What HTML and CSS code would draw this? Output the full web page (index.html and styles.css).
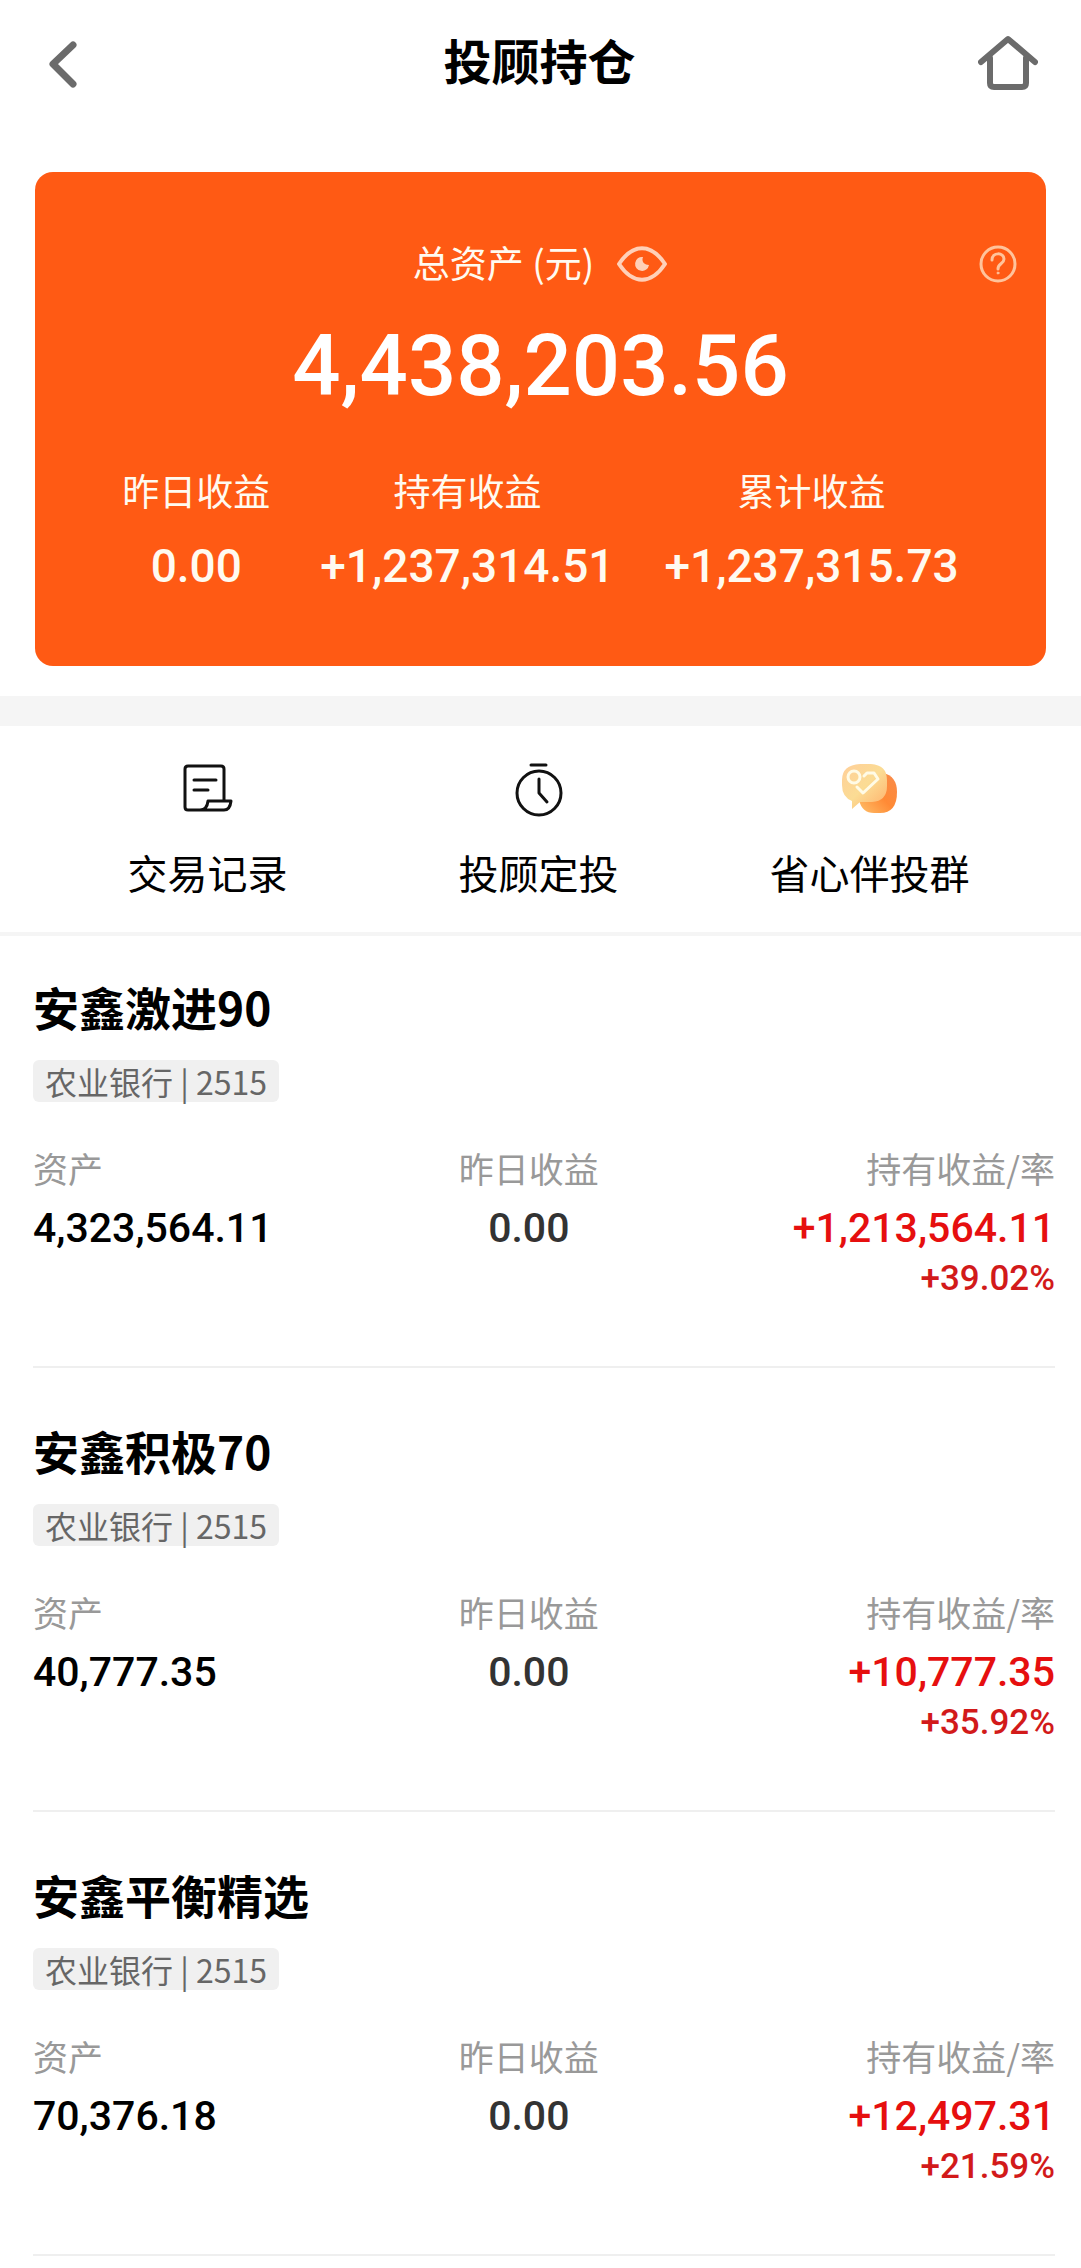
FILE: index.html
```html
<!DOCTYPE html>
<html lang="zh-CN">
<head>
  <meta charset="UTF-8" />
  <meta name="viewport" content="width=device-width, initial-scale=1.0"/>
  <title>投顾持仓</title>
  <link rel="stylesheet" href="styles.css">
</head>
<body>
  <header class="topbar">
    <button class="icon-btn" type="button" aria-label="返回">
      <svg width="60" height="60" viewBox="0 0 60 60" fill="none" stroke="#6b6b6b" stroke-width="7" stroke-linecap="round" stroke-linejoin="round">
        <path d="M32 13 L12 32 L32 52"/>
      </svg>
    </button>
    <h1>投顾持仓</h1>
    <a class="icon-btn" href="#" aria-label="首页">
      <svg width="60" height="60" viewBox="0 0 60 60" fill="none" stroke="#6b6b6b" stroke-width="6" stroke-linecap="round" stroke-linejoin="round">
        <path d="M3 30 L30 7 L57 30"/>
        <path d="M12 26 V51 Q12 55 16 55 H44 Q48 55 48 51 V26"/>
      </svg>
    </a>
  </header>

  <!-- Total assets card -->
  <section class="card">
    <div class="card-head">
      <span class="card-label">总资产 (元)</span>
      <button class="icon-btn" type="button" aria-label="隐藏金额">
        <svg width="52" height="36" viewBox="0 0 52 36">
          <path d="M3 18 C17 -3 35 -3 49 18 C35 39 17 39 3 18 Z" fill="none" stroke="#ffd0b8" stroke-width="4" stroke-linejoin="round"/>
          <path d="M27 11 A7 7 0 1 0 33 19 C29 19 25 16 27 11 Z" fill="#ffd0b8"/>
        </svg>
      </button>
      <button class="icon-btn help" type="button" aria-label="说明">
        <svg width="40" height="40" viewBox="0 0 40 40" fill="none" stroke="#ffc39b" stroke-width="3" stroke-linecap="round">
          <circle cx="20" cy="20" r="17"/>
          <path d="M14 16 C14 8 26 8 26 15 C26 20 20 19 20 25"/>
          <circle cx="20" cy="29" r="1" fill="#ffc39b" stroke-width="1"/>
        </svg>
      </button>
    </div>
    <p class="total">4,438,203.56</p>
    <dl class="summary">
      <div>
        <dt>昨日收益</dt>
        <dd>0.00</dd>
      </div>
      <div>
        <dt>持有收益</dt>
        <dd>+1,237,314.51</dd>
      </div>
      <div>
        <dt>累计收益</dt>
        <dd>+1,237,315.73</dd>
      </div>
    </dl>
  </section>

  <!-- Shortcuts -->
  <nav class="actions">
    <a href="#">
      <svg width="60" height="60" viewBox="0 0 60 60" fill="none" stroke="#111" stroke-width="3" stroke-linecap="round" stroke-linejoin="round">
        <path d="M46 40 V9 Q46 6 43 6 H10 Q7 6 7 9 V47 Q7 50 10 50 H46 Q52 50 53 41 H30 Q29 50 22 50"/>
        <path d="M16 20 H38 M16 30 H30"/>
      </svg>
      <span>交易记录</span>
    </a>
    <a href="#">
      <svg width="60" height="60" viewBox="0 0 60 60" fill="none" stroke="#111" stroke-width="3" stroke-linecap="round" stroke-linejoin="round">
        <path d="M22 5 H37"/>
        <circle cx="30" cy="33" r="22"/>
        <path d="M30 19 V33 L38 42"/>
      </svg>
      <span>投顾定投</span>
    </a>
    <a href="#">
      <svg width="60" height="60" viewBox="0 0 60 60" fill="none">
        <defs>
          <linearGradient id="bubbleBack" x1="0" y1="1" x2="1" y2="0">
            <stop offset="0" stop-color="#ffc069"/>
            <stop offset="0.5" stop-color="#ff8a35"/>
            <stop offset="1" stop-color="#f98b4c"/>
          </linearGradient>
          <linearGradient id="bubbleFront" x1="0" y1="0" x2="1" y2="1">
            <stop offset="0" stop-color="#ffcf9a"/>
            <stop offset="0.5" stop-color="#fbdc94"/>
            <stop offset="1" stop-color="#ffb06a"/>
          </linearGradient>
        </defs>
        <path d="M36 13 H43 Q57 16 57 32 Q57 53 40 53 H34 Q22 53 19 40 Z" fill="url(#bubbleBack)"/>
        <path d="M20 4 H31 Q47 5 47 20 V26 Q47 41 32 42 H20 L12 49 V41 Q2 37 2 25 V20 Q2 5 20 4 Z" fill="url(#bubbleFront)"/>
        <circle cx="14" cy="17" r="6" stroke="#fffbe6" stroke-width="3"/>
        <path d="M24 16 L27 13 H34 L38 19 L23 33 L17 27" stroke="#fffbe6" stroke-width="3" stroke-linecap="round" stroke-linejoin="round"/>
      </svg>
      <span>省心伴投群</span>
    </a>
  </nav>

  <!-- Holdings -->
  <main class="funds">
    <article class="fund">
      <h2>安鑫激进90</h2>
      <p class="bank">农业银行 | 2515</p>
      <dl class="figures">
        <div>
          <dt>资产</dt>
          <dd>4,323,564.11</dd>
        </div>
        <div>
          <dt>昨日收益</dt>
          <dd class="flat">0.00</dd>
        </div>
        <div>
          <dt>持有收益/率</dt>
          <dd class="gain">+1,213,564.11</dd>
          <dd class="rate">+39.02%</dd>
        </div>
      </dl>
    </article>

    <article class="fund">
      <h2>安鑫积极70</h2>
      <p class="bank">农业银行 | 2515</p>
      <dl class="figures">
        <div>
          <dt>资产</dt>
          <dd>40,777.35</dd>
        </div>
        <div>
          <dt>昨日收益</dt>
          <dd class="flat">0.00</dd>
        </div>
        <div>
          <dt>持有收益/率</dt>
          <dd class="gain">+10,777.35</dd>
          <dd class="rate">+35.92%</dd>
        </div>
      </dl>
    </article>

    <article class="fund">
      <h2>安鑫平衡精选</h2>
      <p class="bank">农业银行 | 2515</p>
      <dl class="figures">
        <div>
          <dt>资产</dt>
          <dd>70,376.18</dd>
        </div>
        <div>
          <dt>昨日收益</dt>
          <dd class="flat">0.00</dd>
        </div>
        <div>
          <dt>持有收益/率</dt>
          <dd class="gain">+12,497.31</dd>
          <dd class="rate">+21.59%</dd>
        </div>
      </dl>
    </article>
  </main>
</body>
</html>
```
FILE: styles.css
```css
* {
  box-sizing: border-box;
  margin: 0;
  padding: 0;
}
body {
  font-family: "Noto Sans CJK SC", sans-serif;
  background-color: #fff;
  color: #000;
}
a {
  color: inherit;
  text-decoration: none;
}
svg {
  display: block;
}
.icon-btn {
  background: none;
  border: none;
  cursor: pointer;
}

/* Top bar */
.topbar {
  display: flex;
  align-items: center;
  justify-content: space-between;
  height: 124px;
  padding: 0 43px 0 41px;
}
.topbar h1 {
  padding-bottom: 6px;
  font-size: 48px;
  line-height: 60px;
}

/* Total assets card */
.card {
  margin: 48px 35px 30px;
  padding: 64px 24px 72px;
  border-radius: 18px;
  background-color: #ff5a14;
  color: #fffaf0;
  text-align: center;
}
.card-head {
  position: relative;
  display: flex;
  align-items: center;
  justify-content: center;
  gap: 22px;
  height: 56px;
}
.card-label {
  font-size: 37px;
  line-height: 56px;
  padding-bottom: 4px;
}
.help {
  position: absolute;
  right: 4px;
}
.total {
  font-family: Roboto, sans-serif;
  font-weight: 500;
  font-size: 85px;
  line-height: 108px;
  margin-top: 20px;
  color: #fff;
}
.summary {
  display: flex;
  justify-content: center;
  gap: 50px;
  margin-top: 42px;
}
.summary dt {
  font-size: 37px;
  line-height: 56px;
}
.summary dd {
  font-family: Roboto, sans-serif;
  font-weight: 500;
  font-size: 46px;
  line-height: 56px;
  margin-top: 20px;
}

/* Shortcuts */
.actions {
  display: grid;
  grid-template-columns: repeat(3, 1fr);
  padding: 34px 46px 32px 42px;
  border-top: 30px solid #f5f5f5;
  border-bottom: 4px solid #f5f5f5;
}
.actions a {
  display: flex;
  flex-direction: column;
  align-items: center;
  gap: 24px;
  font-size: 40px;
  line-height: 56px;
}

/* Holdings */
.funds {
  padding: 0 26px 0 33px;
}
.fund {
  padding: 52px 0 66px;
  border-bottom: 2px solid #efefef;
}
.fund:first-child {
  padding-top: 40px;
}
.fund h2 {
  font-size: 46px;
  line-height: 60px;
}
.bank {
  display: inline-block;
  margin-top: 24px;
  padding: 0 12px;
  border-radius: 6px;
  background-color: #f0f0f0;
  color: #666;
  font-size: 32px;
  line-height: 42px;
}
.figures {
  display: grid;
  grid-template-columns: 38fr 22fr 41fr;
  margin-top: 36px;
  text-align: center;
}
.figures div:first-child {
  text-align: left;
}
.figures div:last-child {
  text-align: right;
}
.figures dt {
  color: #999;
  font-size: 35px;
  line-height: 60px;
}
.figures dd {
  font-family: Roboto, sans-serif;
  font-weight: 500;
  font-size: 41px;
  line-height: 60px;
}
.figures .flat {
  color: #333;
}
.figures .gain {
  color: #e60f0f;
}
.figures .rate {
  color: #d21a1a;
  font-size: 35px;
  line-height: 42px;
}
```
